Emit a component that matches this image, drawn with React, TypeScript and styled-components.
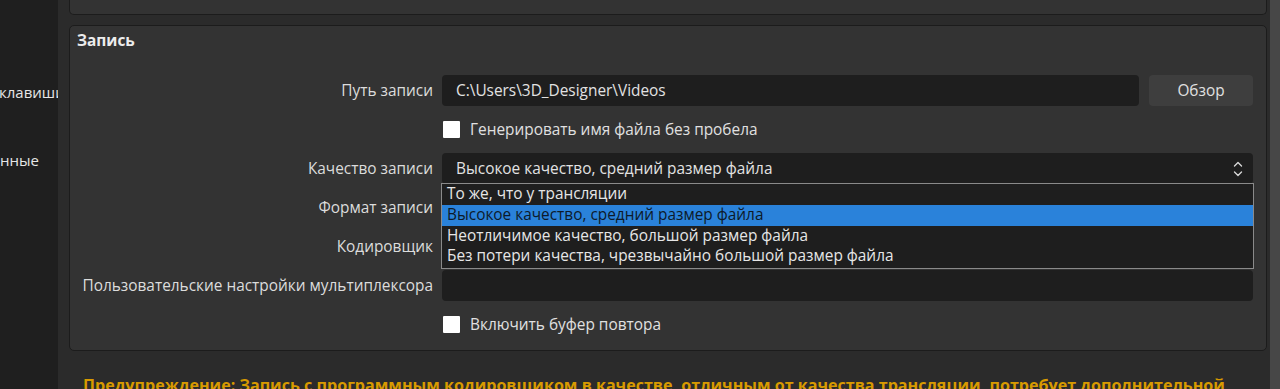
import React from 'react'
import styled, { createGlobalStyle } from 'styled-components';

const GlobalStyle = createGlobalStyle`
html, body {
  margin: 0;
  padding: 0;
  background: #2b2b2b;
  overflow: hidden;
}
body {
  font-family: "Open Sans", "Noto Sans", sans-serif;
  color: #dedede;
}
`;

const Window = styled.div`
display: flex;
width: 1280px;
height: 389px;
overflow: hidden;
`;

const Sidebar = styled.div`
width: 58px;
flex-shrink: 0;
background: #1f1f1f;
display: flex;
flex-direction: column;
padding-top: 80px;
gap: 44px;
box-sizing: border-box;
overflow: hidden;
`;

const SideItem = styled.div<{ shift: number }>`
font-size: 15px;
line-height: 24px;
color: #e6e6e6;
white-space: nowrap;
margin-left: ${({ shift }) => shift}px;
`;

const Main = styled.div`
flex: 1;
display: flex;
flex-direction: column;
gap: 10px;
padding: 0 3px 0 11px;
min-width: 0;
`;

const TopGroup = styled.div`
height: 14px;
flex-shrink: 0;
background: #333333;
border: 1px solid #1c1c1c;
border-top: none;
border-radius: 0 0 5px 5px;
`;

const Group = styled.div`
background: #333333;
border: 1px solid #1c1c1c;
border-radius: 5px;
padding: 5px 13px 0 7px;
height: 326px;
box-sizing: border-box;
flex-shrink: 0;
position: relative;
`;

const GroupTitle = styled.div`
font-size: 15.4px;
font-weight: 700;
color: #ececec;
line-height: 20px;
height: 44px;
`;

const Form = styled.div`
display: grid;
grid-template-columns: 356px 1fr;
column-gap: 9px;
row-gap: 8px;
grid-auto-rows: 31px;
`;

const Label = styled.div`
font-size: 15.4px;
text-align: right;
align-self: center;
color: #dcdcdc;
white-space: nowrap;
`;

const FieldRow = styled.div`
display: flex;
gap: 10px;
`;

const TextBox = styled.div`
flex: 1;
background: #1e1e1e;
border-radius: 4px;
display: flex;
align-items: center;
padding: 0 14px;
font-size: 15.4px;
color: #e2e2e2;
white-space: nowrap;
`;

const Button = styled.div`
width: 104px;
background: #3e3e3e;
border-radius: 4px;
display: flex;
align-items: center;
justify-content: center;
font-size: 15.4px;
color: #e0e0e0;
`;

const CheckRow = styled.div`
display: flex;
align-items: center;
gap: 10px;
font-size: 15.4px;
color: #e0e0e0;
padding-left: 1px;
`;

const Box = styled.span`
width: 17px;
height: 17px;
background: #ffffff;
border-radius: 1px;
flex-shrink: 0;
`;

const Combo = styled(TextBox)`
justify-content: space-between;
padding-right: 10px;
`;

const Popup = styled.div`
position: absolute;
left: 371px;
top: 157px;
width: 811px;
background: #1e1e1e;
border: 1px solid #8a8a8a;
padding: 0 0 1px;
z-index: 2;
`;

const Option = styled.div<{ selected?: boolean }>`
height: 20.75px;
line-height: 20px;
padding-left: 5px;
font-size: 15.4px;
background: ${({ selected }) => (selected ? '#2a82da' : 'transparent')};
color: ${({ selected }) => (selected ? '#0d1a2a' : '#e6e6e6')};
white-space: nowrap;
`;

const Warning = styled.div`
font-size: 16.1px;
font-weight: 700;
color: #d89a00;
padding: 13px 0 0 14px;
white-space: nowrap;
`;

const ScrollTrack = styled.div`
width: 10px;
flex-shrink: 0;
background: #474747;
`;

const Arrows = () => (
  <svg width="10" height="18" viewBox="0 0 10 18" fill="none" stroke="#d8d8d8" strokeWidth="1.4" strokeLinecap="round" strokeLinejoin="round">
    <path d="M1.5 6 L5 2.5 L8.5 6" />
    <path d="M1.5 12 L5 15.5 L8.5 12" />
  </svg>
);

const options = [
  'То же, что у трансляции',
  'Высокое качество, средний размер файла',
  'Неотличимое качество, большой размер файла',
  'Без потери качества, чрезвычайно большой размер файла',
];

function App() {
  return (
    <Window>
      <GlobalStyle />
      <Sidebar>
        <SideItem shift={-1}>клавиши</SideItem>
        <SideItem shift={0}>нные</SideItem>
      </Sidebar>
      <Main>
        <TopGroup />
        <Group>
          <GroupTitle>Запись</GroupTitle>
          <Form>
            <Label>Путь записи</Label>
            <FieldRow>
              <TextBox>C:\Users\3D_Designer\Videos</TextBox>
              <Button>Обзор</Button>
            </FieldRow>

            <span />
            <CheckRow><Box />Генерировать имя файла без пробела</CheckRow>

            <Label>Качество записи</Label>
            <Combo>Высокое качество, средний размер файла<Arrows /></Combo>

            <Label>Формат записи</Label>
            <Combo />

            <Label>Кодировщик</Label>
            <Combo />

            <Label>Пользовательские настройки мультиплексора</Label>
            <TextBox />

            <span />
            <CheckRow><Box />Включить буфер повтора</CheckRow>
          </Form>
          <Popup>
            {options.map((o, i) => (
              <Option key={o} selected={i === 1}>{o}</Option>
            ))}
          </Popup>
        </Group>
        <Warning>Предупреждение: Запись с программным кодировщиком в качестве, отличным от качества трансляции, потребует дополнительной</Warning>
      </Main>
      <ScrollTrack />
    </Window>
  )
}

export default App
